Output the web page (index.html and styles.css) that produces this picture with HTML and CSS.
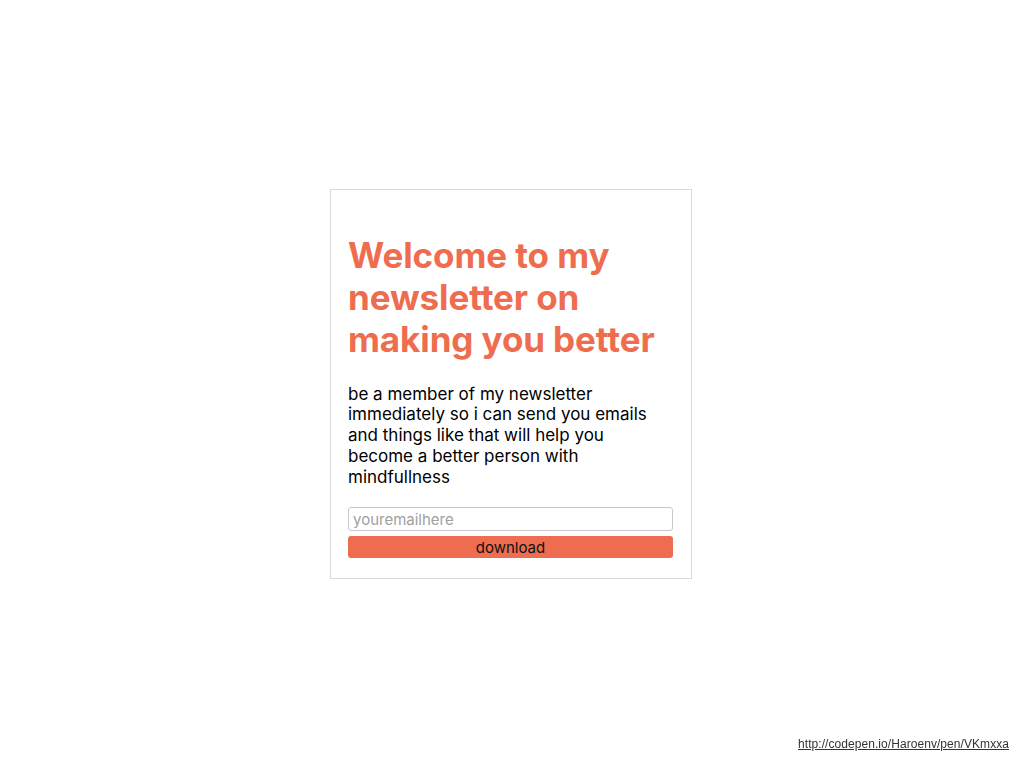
FILE: index.html
```html
<!DOCTYPE html>
<html lang="en">
<head>
<meta charset="utf-8">
<title>Newsletter</title>
<link rel="stylesheet" href="styles.css">
</head>
<body>
<main class="stage">
  <section class="card">
    <h1 class="title">Welcome to my newsletter on making you better</h1>
    <p class="lead">be a member of my newsletter immediately so i can send you emails and things like that will help you become a better person with mindfullness</p>
    <form class="signup">
      <input class="email" type="email" placeholder="youremailhere">
      <button class="submit" type="button">download</button>
    </form>
  </section>
</main>
<a class="credit" href="#">http://codepen.io/Haroenv/pen/VKmxxa</a>
</body>
</html>
```
FILE: styles.css
```css
* { box-sizing: border-box; }
html, body { margin: 0; height: 100%; background: #fff; }
body { font-family: Inter, "Noto Sans", sans-serif; color: #000; }
.stage {
  height: 100vh;
  display: flex;
  align-items: center;
  justify-content: center;
  padding-right: 2px;
}
.card {
  width: 362px;
  border: 1px solid #d9d9d9;
  padding: 44px 18px 20px 17px;
  display: flex;
  flex-direction: column;
}
.title {
  margin: 0;
  color: #ef6d4f;
  font-size: 35px;
  line-height: 42px;
  font-weight: 700;
  letter-spacing: -0.1px;
}
.lead {
  margin: 24px 0 20px;
  font-size: 17px;
  line-height: 20.75px;
  letter-spacing: 0;
}
.signup {
  display: flex;
  flex-direction: column;
  gap: 5px;
}
.email {
  height: 24px;
  border: 1px solid #c8c8c8;
  border-radius: 3px;
  padding: 0 4px;
  font-family: inherit;
  font-size: 15px;
}
.email::placeholder { color: #a0a0a0; }
.submit {
  height: 22px;
  border: none;
  border-radius: 3px;
  background: #ee6d50;
  color: #111;
  font-family: inherit;
  font-size: 15px;
  padding: 0;
}
.credit {
  position: fixed;
  right: 15px;
  bottom: 17px;
  font-family: "Liberation Sans", Arial, sans-serif;
  font-size: 12px;
  letter-spacing: 0.06px;
  color: #333;
  text-decoration: underline;
}
```
